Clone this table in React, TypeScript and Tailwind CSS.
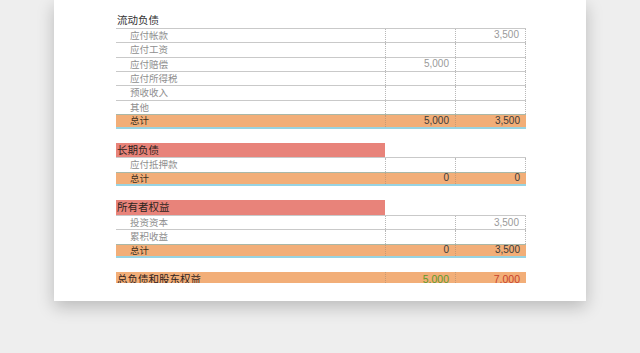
import React from "react";

type Row = { label: string; a?: string; b?: string };

const font = { fontFamily: '"Noto Sans CJK SC", "Liberation Sans", sans-serif' };
const numFont = { fontFamily: '"Liberation Sans", "Noto Sans CJK SC", sans-serif' };

const DataRow = ({ row }: { row: Row }) => (
  <div className="flex h-[14.4px] border-t border-[#c9c9c9] text-[9.5px] leading-none">
    <div className="w-[269px] flex items-center pl-[14px] text-[#8f8f8f]">{row.label}</div>
    <div className="w-[70px] flex items-center justify-end pr-[6px] border-l border-dotted border-[#b8b8b8] text-[#9a9a9a] text-[10px]" style={numFont}>
      {row.a}
    </div>
    <div className="w-[71px] flex items-center justify-end pr-[6px] border-l border-r border-dotted border-[#b8b8b8] text-[#9a9a9a] text-[10px]" style={numFont}>
      {row.b}
    </div>
  </div>
);

const TotalRow = ({ a, b }: { a: string; b: string }) => (
  <div className="flex h-[14.4px] border-t border-[#a9b8a8] border-b-2 border-b-[#98d3e2] bg-[#f2ae78] text-[9.5px] leading-none">
    <div className="w-[269px] flex items-center pl-[14px] text-[#3d3020]">总计</div>
    <div className="w-[70px] flex items-center justify-end pr-[6px] border-l border-dotted border-[#c99a72] text-[#3a3a3a] text-[10px]" style={numFont}>
      {a}
    </div>
    <div className="w-[71px] flex items-center justify-end pr-[6px] border-l border-dotted border-[#c99a72] text-[#3a3a3a] text-[10px]" style={numFont}>
      {b}
    </div>
  </div>
);

const RedHeader = ({ label }: { label: string }) => (
  <div className="flex h-[14.4px] text-[10.5px] leading-none">
    <div className="w-[269px] flex items-center pl-[1px] bg-[#e8837a] text-[#2f2320]">{label}</div>
  </div>
);

const Gap = () => <div className="h-[14.4px]" />;

const current: Row[] = [
  { label: "应付帐款", b: "3,500" },
  { label: "应付工资" },
  { label: "应付赔偿", a: "5,000" },
  { label: "应付所得税" },
  { label: "预收收入" },
  { label: "其他" },
];

export default function App() {
  return (
    <div className="w-[640px] h-[353px] bg-[#eeeeee] pl-[54px] overflow-hidden" style={font}>
      <div className="w-[532px] h-[301px] bg-white shadow-[0_6px_16px_rgba(0,0,0,0.22)] pl-[62px] pt-[13.4px]">
        <div className="w-[410px]">
          <div className="flex h-[14.4px] items-center pl-[1px] text-[10.5px] leading-none text-[#333]">流动负债</div>
          {current.map((r) => (
            <DataRow key={r.label} row={r} />
          ))}
          <TotalRow a="5,000" b="3,500" />
          <Gap />
          <RedHeader label="长期负债" />
          <DataRow row={{ label: "应付抵押款" }} />
          <TotalRow a="0" b="0" />
          <Gap />
          <RedHeader label="所有者权益" />
          <DataRow row={{ label: "投资资本", b: "3,500" }} />
          <DataRow row={{ label: "累积收益" }} />
          <TotalRow a="0" b="3,500" />
          <Gap />
          <div className="h-[10.7px] overflow-hidden">
            <div className="flex h-[14.4px] bg-[#f2ae78] text-[10.5px] leading-none">
              <div className="w-[269px] flex items-center pl-[1px] text-[#2f2320]">总负债和股东权益</div>
              <div className="w-[70px] flex items-center justify-end pr-[6px] border-l border-dotted border-[#c99a72] text-[#5f9a2a]" style={numFont}>
                5,000
              </div>
              <div className="w-[71px] flex items-center justify-end pr-[6px] border-l border-dotted border-[#c99a72] text-[#c8432c]" style={numFont}>
                7,000
              </div>
            </div>
          </div>
        </div>
      </div>
    </div>
  );
}
